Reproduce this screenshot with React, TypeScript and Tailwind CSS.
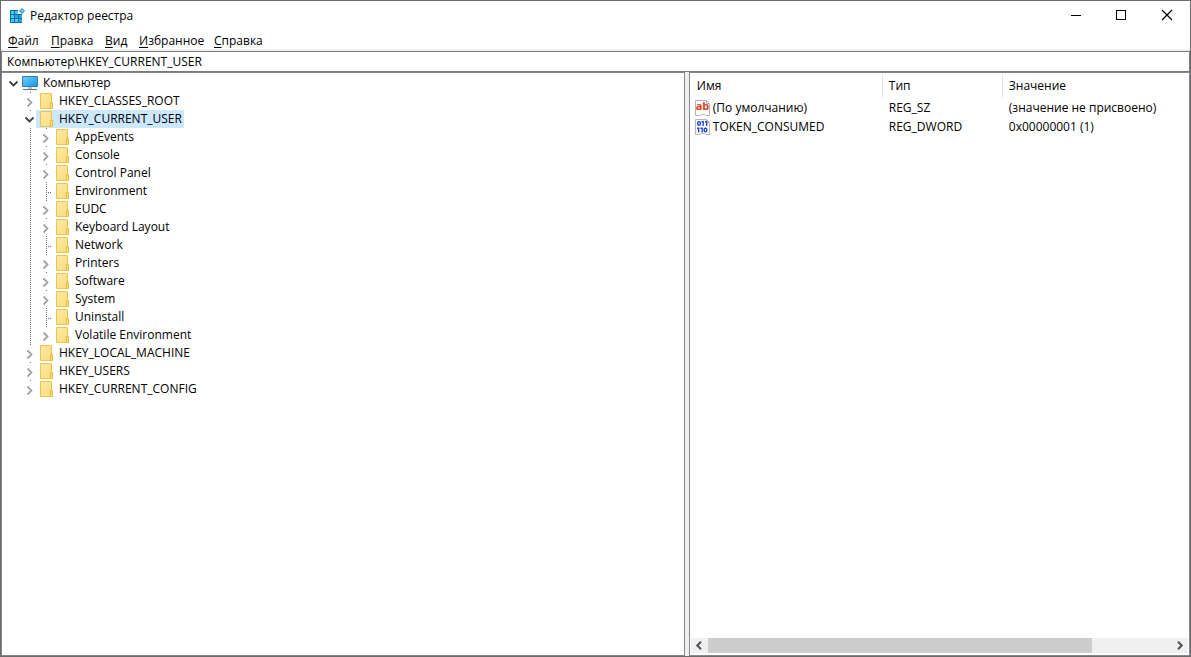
import { useState, type ReactNode } from "react";

type KeyNode = {
  name: string;
  level: number;
  state: "open" | "closed" | "leaf";
  parent?: string;
};

const HKCU = "HKEY_CURRENT_USER";

const KEYS: KeyNode[] = [
  { name: "HKEY_CLASSES_ROOT", level: 1, state: "closed" },
  { name: HKCU, level: 1, state: "open" },
  { name: "AppEvents", level: 2, state: "closed", parent: HKCU },
  { name: "Console", level: 2, state: "closed", parent: HKCU },
  { name: "Control Panel", level: 2, state: "closed", parent: HKCU },
  { name: "Environment", level: 2, state: "leaf", parent: HKCU },
  { name: "EUDC", level: 2, state: "closed", parent: HKCU },
  { name: "Keyboard Layout", level: 2, state: "closed", parent: HKCU },
  { name: "Network", level: 2, state: "leaf", parent: HKCU },
  { name: "Printers", level: 2, state: "closed", parent: HKCU },
  { name: "Software", level: 2, state: "closed", parent: HKCU },
  { name: "System", level: 2, state: "closed", parent: HKCU },
  { name: "Uninstall", level: 2, state: "leaf", parent: HKCU },
  { name: "Volatile Environment", level: 2, state: "closed", parent: HKCU },
  { name: "HKEY_LOCAL_MACHINE", level: 1, state: "closed" },
  { name: "HKEY_USERS", level: 1, state: "closed" },
  { name: "HKEY_CURRENT_CONFIG", level: 1, state: "closed" },
];

const MENU = [
  { label: "Файл", width: "w-[43px]" },
  { label: "Правка", width: "w-[54px]" },
  { label: "Вид", width: "w-[34px]" },
  { label: "Избранное", width: "w-[75px]" },
  { label: "Справка", width: "w-[54px]" },
];

const VALUES = [
  { name: "(По умолчанию)", type: "REG_SZ", data: "(значение не присвоено)", kind: "string" },
  { name: "TOKEN_CONSUMED", type: "REG_DWORD", data: "0x00000001 (1)", kind: "binary" },
];

function RegeditIcon() {
  return (
    <svg width="16" height="16" viewBox="0 0 16 16" aria-hidden="true">
      <path d="M1 2h8v4h4v9H1z" fill="#0b6fa8" />
      <path d="M2 3h3v3H2zM6 3h3v3H6zM2 7h3v3H2zM2 11h3v3H2zM6 11h3v3H6z" fill="#4cc8f4" />
      <path d="M6 7h3v3H6zM10 7h3v3h-3zM10 11h3v3h-3z" fill="#23a5e0" />
      <path d="M13 .5L15.500 3 13 5.500 10.500 3z" fill="#6cc9ee" stroke="#1b85bd" />
    </svg>
  );
}

function ComputerIcon() {
  return (
    <svg width="18" height="18" viewBox="0 0 18 18" aria-hidden="true">
      <defs>
        <linearGradient id="screen" x1="0" y1="0" x2="1" y2="1">
          <stop offset="0" stopColor="#6fd0fb" />
          <stop offset="1" stopColor="#1c93e6" />
        </linearGradient>
      </defs>
      <path d="M2.500 2.500h15v10h-15z" fill="url(#screen)" stroke="#2d7fb4" />
      <path d="M8 13h4v2H8z" fill="#b9c4cb" />
      <path d="M3 15h14v1H3z" fill="#5d7482" />
    </svg>
  );
}

function FolderIcon() {
  return (
    <svg width="18" height="18" viewBox="0 0 18 18" aria-hidden="true">
      <defs>
        <linearGradient id="folder" x1="0" y1="0" x2="1" y2="1">
          <stop offset="0" stopColor="#ffe9a6" />
          <stop offset="1" stopColor="#fddc7c" />
        </linearGradient>
      </defs>
      <path d="M4.500 1.500h11v15h-11z" fill="url(#folder)" stroke="#ecc54c" />
      <path d="M14.500 10.500h2v6h-2z" fill="#ffe594" stroke="#e6b93a" />
    </svg>
  );
}

function ValueIcon({ kind }: { kind: string }) {
  return (
    <svg width="16" height="16" viewBox="0 0 16 16" className="overflow-visible" aria-hidden="true">
      <path d="M.5.5h11l3 3v12h-4l-1-1h-3l-1 1h-5z" fill="#fbfbfb" stroke="#b4b4b4" />
      <path d="M11.500.5v3h3" fill="none" stroke="#b4b4b4" />
      {kind === "string" ? (
        <text
          x="7.500"
          y="10"
          textAnchor="middle"
          fontSize="11"
          fill="#d9441e"
          className="font-['Open_Sans',sans-serif] font-bold"
        >
          ab
        </text>
      ) : (
        <g fill="none" stroke="#2447d6" strokeWidth="1.400">
          <rect x="2.700" y="2.700" width="2.600" height="3.600" rx="1.200" />
          <path d="M6.500 2.700h1.700V7M10 2.700h1.700V7" />
          <path d="M2 9.200h1.700v4.300M5.500 9.200h1.700v4.300" />
          <rect x="9.200" y="9.200" width="2.600" height="3.600" rx="1.200" />
        </g>
      )}
    </svg>
  );
}

// One 16px column of the tree: dotted guides plus the expander glyph.
function Guide({ kind }: { kind: "root" | "open" | "closed" | "leaf" | "through" }) {
  return (
    <svg width="16" height="18" viewBox="0 0 16 18" aria-hidden="true">
      {(kind === "leaf" || kind === "through") && (
        <path d="M10.500 0v18" stroke="#6e6e6e" strokeDasharray="1 1" shapeRendering="crispEdges" />
      )}
      {kind === "leaf" && (
        <path d="M10 10.500h6" stroke="#6e6e6e" strokeDasharray="1 1" shapeRendering="crispEdges" />
      )}
      {(kind === "open" || kind === "closed") && (
        <path d="M10 0h1v1h-1z" fill="#6e6e6e" />
      )}
      {(kind === "open" || kind === "root") && (
        <path d="M5.500 7.500l4 4 4-4" fill="none" stroke="#404040" strokeWidth="1.800" />
      )}
      {kind === "closed" && (
        <path d="M7.500 6.500l4 4-4 4" fill="none" stroke="#a6a6a6" strokeWidth="1.900" />
      )}
    </svg>
  );
}

function TreeRow({
  node,
  selected,
  open,
  onSelect,
  onToggle,
}: {
  node: KeyNode;
  selected: boolean;
  open: boolean;
  onSelect: () => void;
  onToggle: () => void;
}) {
  const kind = node.state === "leaf" ? "leaf" : open ? "open" : "closed";
  return (
    <li role="treeitem" aria-level={node.level + 1} aria-selected={selected} className="flex h-[18px]">
      <span className="w-4 shrink-0" />
      {node.level === 2 && <Guide kind="through" />}
      {kind === "leaf" ? (
        <Guide kind="leaf" />
      ) : (
        <button type="button" aria-label={`Развернуть ${node.name}`} onClick={onToggle}>
          <Guide kind={kind} />
        </button>
      )}
      <button
        type="button"
        onClick={onSelect}
        className={`flex items-center gap-[5px] pr-[2px] whitespace-nowrap ${selected ? "bg-[#cce8ff]" : ""}`}
      >
        <FolderIcon />
        {node.name}
      </button>
    </li>
  );
}

function CaptionButton({ label, children }: { label: string; children: ReactNode }) {
  return (
    <button type="button" aria-label={label} className="flex h-7 w-[46px] items-center justify-center hover:bg-[#e5e5e5]">
      <svg width="12" height="12" viewBox="0 0 12 12" fill="none" stroke="#000" aria-hidden="true">
        {children}
      </svg>
    </button>
  );
}

function HeaderCell({ children }: { children: ReactNode }) {
  return (
    <th className="h-6 border-r border-[#e5e5e5] pl-[6px] text-left font-normal last:border-r-0">{children}</th>
  );
}

export default function App() {
  const [selected, setSelected] = useState(HKCU);
  const [expanded, setExpanded] = useState<string[]>([HKCU]);

  const toggle = (name: string) =>
    setExpanded((prev) => (prev.includes(name) ? prev.filter((n) => n !== name) : [...prev, name]));

  const visible = KEYS.filter((k) => !k.parent || expanded.includes(k.parent));

  return (
    <div className="flex h-screen flex-col border border-[#6b6b6b] bg-white font-['Open_Sans','Noto_Sans',sans-serif] text-[12px] leading-4 text-black">
      <header className="flex h-[30px] shrink-0 items-start">
        <div className="flex h-[30px] flex-1 items-center gap-[5px] pl-2">
          <RegeditIcon />
          <h1>Редактор реестра</h1>
        </div>
        <CaptionButton label="Свернуть">
          <path d="M2 6.500h10" shapeRendering="crispEdges" />
        </CaptionButton>
        <CaptionButton label="Развернуть">
          <path d="M1.500 1.500h9v9h-9z" shapeRendering="crispEdges" />
        </CaptionButton>
        <CaptionButton label="Закрыть">
          <path d="M1 1l10 10M11 1L1 11" strokeWidth="1.200" />
        </CaptionButton>
      </header>

      <nav className="flex h-5 shrink-0 items-end border-b-2 border-[#f0f0f0] pl-[7px]" aria-label="Меню">
        {MENU.map((item) => (
          <button key={item.label} type="button" className={`${item.width} text-left whitespace-nowrap`}>
            <span className="underline underline-offset-2">{item.label[0]}</span>
            {item.label.slice(1)}
          </button>
        ))}
      </nav>

      <input
        aria-label="Путь"
        defaultValue={"Компьютер\\HKEY_CURRENT_USER"}
        className="h-[21px] shrink-0 border border-[#7a7a7a] px-[5px] outline-none"
      />

      <main className="flex min-h-0 flex-1 bg-[#f0f0f0]">
        <section className="min-w-0 flex-[685] overflow-hidden border border-[#828790] bg-white pt-px pl-[2px]">
          <ul role="tree" aria-label="Реестр">
            <li role="treeitem" aria-level={1} aria-selected={false} className="flex h-[18px]">
              <Guide kind="root" />
              <button type="button" className="flex items-center gap-[5px] whitespace-nowrap">
                <ComputerIcon />
                Компьютер
              </button>
            </li>
            {visible.map((node) => (
              <TreeRow
                key={node.name}
                node={node}
                selected={selected === node.name}
                open={expanded.includes(node.name)}
                onSelect={() => setSelected(node.name)}
                onToggle={() => toggle(node.name)}
              />
            ))}
          </ul>
        </section>
        <div className="w-1 shrink-0" />
        <section className="flex min-w-0 flex-[501] flex-col border border-[#828790] bg-white px-px pt-px pb-[2px]">
          <div className="flex-1 overflow-hidden">
            <table className="w-full table-fixed border-separate border-spacing-0 whitespace-nowrap">
              <colgroup>
                <col className="w-48" />
                <col className="w-[120px]" />
                <col />
              </colgroup>
              <thead>
                <tr>
                  <HeaderCell>Имя</HeaderCell>
                  <HeaderCell>Тип</HeaderCell>
                  <HeaderCell>Значение</HeaderCell>
                </tr>
              </thead>
              <tbody>
                {VALUES.map((v) => (
                  <tr key={v.name} className="h-[19px]">
                    <td className="pl-1">
                      <span className="flex items-center gap-[2px]">
                        <ValueIcon kind={v.kind} />
                        {v.name}
                      </span>
                    </td>
                    <td className="pl-[6px]">{v.type}</td>
                    <td className="pl-[6px]">{v.data}</td>
                  </tr>
                ))}
              </tbody>
            </table>
          </div>
          <div className="flex h-[15px] shrink-0 bg-[#f0f0f0]">
            <button type="button" aria-label="Влево" className="flex w-[17px] items-center justify-center">
              <svg width="8" height="9" viewBox="0 0 8 9" aria-hidden="true">
                <path d="M6 .8L2.300 4.500 6 8.200" fill="none" stroke="#505050" strokeWidth="2" />
              </svg>
            </button>
            <div className="flex flex-1">
              <div className="w-[83%] bg-[#cdcdcd]" />
            </div>
            <button type="button" aria-label="Вправо" className="flex w-[17px] items-center justify-center">
              <svg width="8" height="9" viewBox="0 0 8 9" aria-hidden="true">
                <path d="M2 .8l3.700 3.700L2 8.200" fill="none" stroke="#505050" strokeWidth="2" />
              </svg>
            </button>
          </div>
        </section>
      </main>
    </div>
  );
}
